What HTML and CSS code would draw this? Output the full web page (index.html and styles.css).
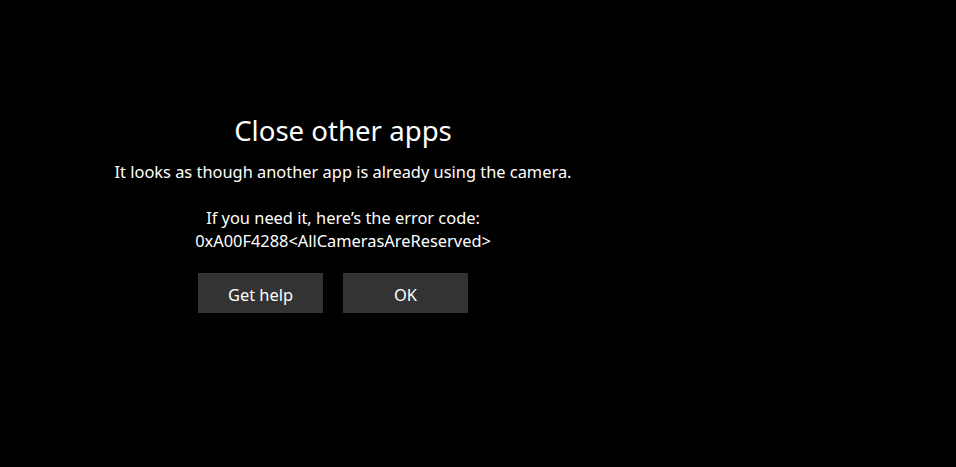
FILE: index.html
```html
<!DOCTYPE html>
<html>
<head>
<meta charset="utf-8">
<link rel="stylesheet" href="styles.css">
</head>
<body>
<div class="panel">
  <h1 class="title">Close other apps</h1>
  <p class="message">It looks as though another app is already using the camera.</p>
  <p class="code">If you need it, here’s the error code:<br>0xA00F4288&lt;AllCamerasAreReserved&gt;</p>
  <div class="actions">
    <button class="btn">Get help</button>
    <button class="btn">OK</button>
  </div>
</div>
</body>
</html>
```

FILE: styles.css
```css
html, body {
  margin: 0;
  padding: 0;
  background: #000;
  height: 100%;
}
body {
  font-family: "Noto Sans", "Open Sans", sans-serif;
  color: #fff;
}
.panel {
  width: 686px;
  display: flex;
  flex-direction: column;
  align-items: center;
  text-align: center;
  padding-top: 111px;
}
.title {
  margin: 0;
  font-size: 27.6px;
  font-weight: 400;
  line-height: 38px;
}
.message {
  margin: 12px 0 0;
  font-size: 16.4px;
  line-height: 22px;
}
.code {
  margin: 24px 0 0;
  font-size: 16.4px;
  line-height: 22.5px;
}
.actions {
  display: flex;
  gap: 20px;
  margin-top: 21px;
  padding-right: 20px;
}
.btn {
  width: 125px;
  height: 40px;
  border: 0;
  background: #333;
  color: #fff;
  font-family: inherit;
  font-size: 16.4px;
  padding: 2px 0 0;
}
```
